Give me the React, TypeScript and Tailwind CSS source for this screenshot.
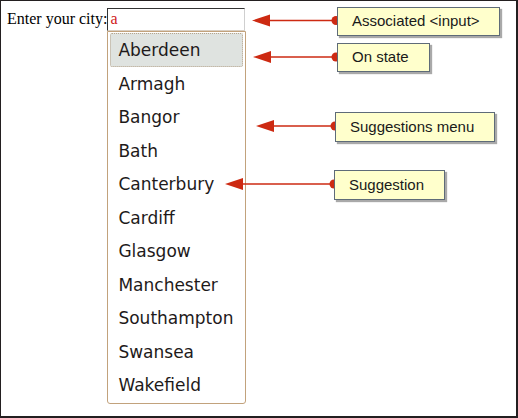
import React from "react";

const cities = [
  "Aberdeen",
  "Armagh",
  "Bangor",
  "Bath",
  "Canterbury",
  "Cardiff",
  "Glasgow",
  "Manchester",
  "Southampton",
  "Swansea",
  "Wakefield",
];

function Callout({ className, children }: { className: string; children: React.ReactNode }) {
  return (
    <div
      className={
        "absolute flex items-center bg-[#ffffcc] border border-[#5e6b78] shadow-[2px_2px_1px_#a9a9a9] text-[15px] text-[#1a1a1a] pl-[14px] " +
        className
      }
      style={{ fontFamily: '"Liberation Sans", Arial, sans-serif' }}
    >
      {children}
    </div>
  );
}

function Arrow({ tip, base, dot, y }: { tip: number; base: number; dot: number; y: number }) {
  const red = "#cd2a12";
  return (
    <g>
      <line x1={base - 1} y1={y} x2={dot} y2={y} stroke={red} strokeWidth={1.6} />
      <polygon points={`${tip},${y} ${base},${y - 6} ${base},${y + 6}`} fill={red} />
      <circle cx={dot} cy={y} r={4.5} fill={red} />
    </g>
  );
}

export default function App() {
  return (
    <div className="relative w-[518px] h-[418px] bg-white border-t border-l border-r-2 border-b-2 border-[#231f20] box-border overflow-hidden">
      <div className="flex items-start pt-[7px] pl-[6px]">
        <div
          className="mt-[1px] text-[16px] leading-[20px] text-black"
          style={{ fontFamily: '"Liberation Serif", "Times New Roman", serif' }}
        >
          Enter your city:
        </div>
        <div className="flex flex-col w-[139px]">
          <div
            className="w-[138px] h-[23px] border border-t-[#333] border-l-[#333] border-r-[#cfcfcf] border-b-[#d9cfc3] pl-[2px] pb-[1px] text-[16px] leading-[20px] text-[#d0201a]"
            style={{ fontFamily: '"Liberation Serif", "Times New Roman", serif' }}
          >
            a
          </div>
          <div
            className="flex flex-col border border-[#c2a27c] rounded-b-[3px] pt-px px-[2px] h-[373px]"
            style={{ fontFamily: '"DejaVu Sans", Verdana, sans-serif' }}
          >
            {cities.map((c, i) => (
              <div
                key={c}
                className={
                  "flex items-center h-[33.5px] pt-[2px] shrink-0 text-[17px] text-[#1e1a1a] " +
                  (i === 0
                    ? "bg-[#dfe3e0] border border-dotted border-[#b6a48c] rounded-[2px] pl-[7px]"
                    : "pl-[8px]")
                }
              >
                {c}
              </div>
            ))}
          </div>
        </div>
      </div>

      <svg
        className="absolute left-[-1px] top-[-1px] pointer-events-none"
        width={518}
        height={418}
        viewBox="0 0 518 418"
      >
        <Arrow tip={252} base={270} dot={336} y={20.5} />
        <Arrow tip={253} base={271} dot={336} y={57} />
        <Arrow tip={256} base={274} dot={335} y={126} />
        <Arrow tip={225} base={243} dot={334} y={184} />
      </svg>

      <Callout className="left-[336px] top-[6px] w-[163px] h-[29px]">Associated &lt;input&gt;</Callout>
      <Callout className="left-[336px] top-[42px] w-[93px] h-[29px]">On state</Callout>
      <Callout className="left-[334px] top-[111px] w-[160px] h-[30px]">Suggestions menu</Callout>
      <Callout className="left-[333px] top-[169px] w-[111px] h-[30px]">Suggestion</Callout>
    </div>
  );
}
